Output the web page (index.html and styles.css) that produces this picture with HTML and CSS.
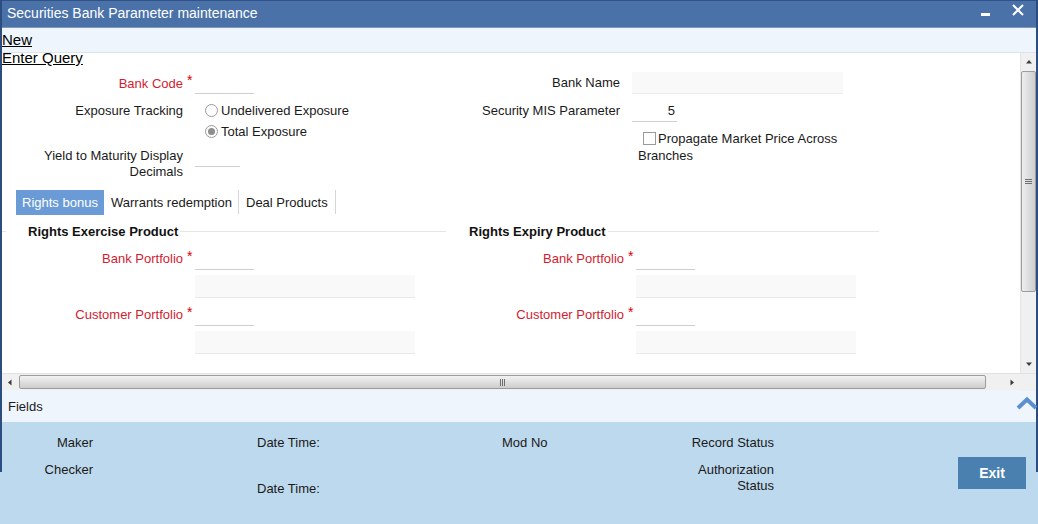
FILE: index.html
```html
<!DOCTYPE html>
<html>
<head>
<meta charset="utf-8">
<link rel="stylesheet" href="styles.css">
</head>
<body>
<div class="window">
  <div class="titlebar">
    <span class="title">Securities Bank Parameter maintenance</span>
    <span class="tb-icons">
      <svg class="ico-min" width="10" height="4" viewBox="0 0 10 4"><rect x="0" y="0" width="9" height="3" fill="#fff"/></svg>
      <svg class="ico-close" width="12" height="12" viewBox="0 0 12 12"><path d="M1 1 L11 11 M11 1 L1 11" stroke="#fff" stroke-width="2"/></svg>
    </span>
  </div>
  <div class="toolbar">
    <a class="tlink">New</a>
    <a class="tlink">Enter Query</a>
  </div>
  <div class="body-area">
    <div class="main">
      <div class="top-grid">
        <div class="col col-l">
          <div class="row r1">
            <span class="lbl req">Bank Code</span><span class="star">*</span>
            <span class="inp w60 h23"></span>
          </div>
          <div class="row r2">
            <span class="lbl lh21">Exposure Tracking</span><span class="star"></span>
            <div class="radios">
              <div class="radio-line"><span class="radio"></span>Undelivered Exposure</div>
              <div class="radio-line"><span class="radio on"></span>Total Exposure</div>
            </div>
          </div>
          <div class="row r3">
            <span class="lbl lh16">Yield to Maturity Display<br>Decimals</span><span class="star"></span>
            <span class="inp w45 yield-inp"></span>
          </div>
        </div>
        <div class="col col-r">
          <div class="row rr1">
            <span class="lbl lbl-r lh22">Bank Name</span>
            <span class="box w211"></span>
          </div>
          <div class="row rr2">
            <span class="lbl lbl-r lh22">Security MIS Parameter</span>
            <span class="inp w45 h22 num">5</span>
          </div>
          <div class="chk-block"><span class="chk"></span>Propagate Market Price Across Branches</div>
        </div>
      </div>
      <div class="tabs">
        <span class="tab active">Rights bonus</span>
        <span class="tab sep t2">Warrants redemption</span>
        <span class="tab sep t3">Deal Products</span>
      </div>
      <div class="fsets">
        <div class="fs fs-l">
          <div class="fs-head"><span class="fs-legend">Rights Exercise Product</span></div>
          <div class="row fr">
            <span class="lbl req lh22">Bank Portfolio</span><span class="star">*</span>
            <span class="inp w60 h22"></span>
          </div>
          <div class="gbox"></div>
          <div class="row fr">
            <span class="lbl req lh22">Customer Portfolio</span><span class="star">*</span>
            <span class="inp w60 h22"></span>
          </div>
          <div class="gbox"></div>
        </div>
        <div class="fs fs-r">
          <div class="fs-head"><span class="fs-legend">Rights Expiry Product</span></div>
          <div class="row fr">
            <span class="lbl req lh22">Bank Portfolio</span><span class="star">*</span>
            <span class="inp w60 h22"></span>
          </div>
          <div class="gbox"></div>
          <div class="row fr">
            <span class="lbl req lh22">Customer Portfolio</span><span class="star">*</span>
            <span class="inp w60 h22"></span>
          </div>
          <div class="gbox"></div>
        </div>
      </div>
    </div>
    <div class="vscroll">
      <svg class="arr" width="16" height="16" viewBox="0 0 16 16"><path d="M5 10 L8 6.5 L11 10 Z" fill="#3c3c3c"/></svg>
      <div class="vthumb"><span class="grip-h"></span><span class="grip-h"></span><span class="grip-h"></span></div>
      <div class="vtrack"></div>
      <svg class="arr" width="16" height="16" viewBox="0 0 16 16"><path d="M5 6 L8 9.5 L11 6 Z" fill="#3c3c3c"/></svg>
    </div>
  </div>
  <div class="hscroll">
    <svg class="arr" width="17" height="17" viewBox="0 0 17 17"><path d="M9.5 5.5 L6 8.5 L9.5 11.5 Z" fill="#3c3c3c"/></svg>
    <div class="hthumb"><span class="grip-v"></span><span class="grip-v"></span><span class="grip-v"></span></div>
    <div class="htrack"></div>
    <svg class="arr" width="17" height="17" viewBox="0 0 17 17"><path d="M7.5 5.5 L11 8.5 L7.5 11.5 Z" fill="#3c3c3c"/></svg>
    <div class="corner"></div>
  </div>
  <div class="fieldsbar">
    <span>Fields</span>
    <svg class="chev" width="22" height="14" viewBox="0 0 22 14"><path d="M2 12 L11 3.5 L20 12" fill="none" stroke="#5b8fd1" stroke-width="4" stroke-linejoin="miter"/></svg>
  </div>
</div>
<div class="footer">
  <div class="fcol c1">
    <div class="fl">Maker</div>
    <div class="fl mt9">Checker</div>
  </div>
  <div class="fcol c2">
    <div class="fl">Date Time:</div>
    <div class="fl mt28">Date Time:</div>
  </div>
  <div class="fcol c3">
    <div class="fl">Mod No</div>
  </div>
  <div class="fcol c4">
    <div class="fl">Record Status</div>
    <div class="fl2 mt10">Authorization<br>Status</div>
  </div>
  <button class="exit">Exit</button>
</div>
</body>
</html>
```

FILE: styles.css
```css
* { box-sizing: border-box; }
html, body { margin: 0; padding: 0; }
body {
  width: 1038px;
  height: 524px;
  overflow: hidden;
  font-family: "Liberation Sans", Arial, sans-serif;
  font-size: 13px;
  color: #1a1a1a;
  background: #bdd9ed;
}
.window {
  border-left: 2px solid #2b4d7f;
  border-right: 2px solid #2b4d7f;
  background: #fff;
}
.titlebar {
  height: 28px;
  background: #4a72a9;
  border-top: 1px solid #2f5186;
  border-bottom: 1px solid #7f97b8;
  display: flex;
  align-items: center;
  justify-content: space-between;
  color: #fff;
  padding-left: 5px;
}
.title { font-size: 14px; position: relative; top: -1px; }
.tb-icons { display: flex; align-items: center; height: 100%; }
.ico-min { margin-right: 21px; margin-top: 2px; }
.ico-close { margin-right: 12px; margin-top: -9px; }
.toolbar {
  height: 25px;
  background: #eef5fd;
  border-bottom: 1px solid #dde3ea;
  padding-top: 3px;
}
.tlink {
  display: block;
  font-size: 15px;
  line-height: 18px;
  color: #000;
  text-decoration: underline;
  width: max-content;
}
.body-area {
  display: flex;
  height: 320px;
}
.main {
  flex: 1;
  padding-top: 19px;
}
.top-grid { display: flex; align-items: flex-start; }
.col-l { width: 440px; }
.col-r { width: 420px; }
.row { display: flex; align-items: flex-start; }
.lbl { display: block; width: 181px; text-align: right; color: #1a1a1a; }
.lbl.req { color: #cf1d30; }
.lbl-r { width: 178px; margin-right: 12px; }
.lh21 { line-height: 21px; }
.lh22 { line-height: 22px; }
.lh16 { line-height: 16px; }
.r1 .lbl { line-height: 23px; }
.star {
  display: block;
  width: 12px;
  padding-left: 4px;
  color: #d00;
  font-size: 14px;
  line-height: 16px;
}
.inp {
  display: block;
  border-bottom: 1px solid #cfcfcf;
  background: #fff;
}
.w60 { width: 59px; }
.w45 { width: 45px; }
.h23 { height: 22px; }
.h22 { height: 22px; }
.num { text-align: right; padding-right: 2px; line-height: 22px; }
.r1 { margin-bottom: 5px; }
.r2 { margin-bottom: 6px; }
.radios { margin-left: 10px; }
.radio-line { display: flex; align-items: center; height: 21px; }
.radio {
  width: 13px; height: 13px;
  border: 1px solid #9a9a9a;
  border-radius: 50%;
  margin-right: 3px;
  background: #fdfdfd;
  display: flex; align-items: center; justify-content: center;
}
.radio.on::after {
  content: "";
  width: 7px; height: 7px;
  border-radius: 50%;
  background: #8d8d8d;
}
.yield-inp { height: 20px; margin-top: -1px; }
.box {
  display: block;
  height: 22px;
  background: #f9f9f9;
  border-bottom: 1px solid #ececec;
}
.w211 { width: 211px; }
.rr1 { margin-bottom: 6px; }
.rr2 { margin-bottom: 8px; }
.chk-block {
  margin-left: 196px;
  width: 210px;
  line-height: 17px;
}
.chk {
  display: inline-block;
  width: 13px; height: 13px;
  border: 1px solid #9a9a9a;
  background: #fdfdfd;
  margin-left: 5px;
  margin-right: 2px;
  vertical-align: -2px;
}
.tabs {
  display: flex;
  margin-top: 10px;
  margin-left: 14px;
  height: 25px;
}
.tab {
  display: flex;
  align-items: center;
  padding: 0 6px;
  height: 25px;
  color: #1a1a1a;
  white-space: nowrap;
}
.tab.active { background: #6a9bd6; color: #fff; width: 88px; }
.tab.sep { position: relative; padding: 0 0 0 7px; }
.tab.t2 { width: 135px; }
.tab.t3 { width: 97px; }
.tab.sep::after {
  content: "";
  position: absolute;
  right: 0; top: 0; bottom: 1px;
  width: 1px;
  background: #d6d6d6;
}
.fsets { display: flex; margin-top: 8px; }
.fs-l { width: 440px; }
.fs-r { width: 437px; }
.fs-head {
  display: flex;
  align-items: center;
  height: 16px;
  margin-bottom: 9px;
}
.fs-head::before {
  content: "";
  width: 4px;
  border-top: 1px solid #e6e6e6;
}
.fs-head::after {
  content: "";
  flex: 1;
  border-top: 1px solid #e6e6e6;
}
.fs-legend {
  font-weight: bold;
  padding-left: 22px;
  padding-right: 2px;
  color: #111;
}
.fs-r .fs-legend { padding-left: 23px; }
.fr { margin-bottom: 5px; }
.fr .star { line-height: 16px; }
.gbox {
  margin-left: 193px;
  width: 220px;
  height: 23px;
  background: #f9f9f9;
  border-bottom: 1px solid #e9e9e9;
  margin-bottom: 6px;
}
.fs-r .row .lbl { width: 182px; }
.fs-r .gbox { margin-left: 194px; }
.vscroll {
  width: 16px;
  background: #f0f0f0;
  display: flex;
  flex-direction: column;
  border-left: 1px solid #e6e6e6;
}
.vscroll .arr { display: block; flex: none; height: 17px; }
.vthumb {
  height: 221px;
  margin: 1px 0 0 0;
  border: 1px solid #9c9c9c;
  border-radius: 2px;
  background: linear-gradient(to right, #eeeeee, #dadada 60%, #cfcfcf);
  display: flex;
  flex-direction: column;
  align-items: center;
  justify-content: center;
  gap: 1px;
}
.grip-h { display: block; width: 7px; height: 1px; background: #6e6e6e; }
.vtrack { flex: 1; }
.hscroll {
  height: 17px;
  background: #f0f0f0;
  border-top: 1px solid #e2e2e2;
  display: flex;
  align-items: center;
}
.hscroll .arr { display: block; flex: none; }
.hthumb {
  width: 967px;
  height: 14px;
  margin-left: 0;
  border: 1px solid #9c9c9c;
  border-radius: 2px;
  background: linear-gradient(to bottom, #f2f2f2, #dcdcdc 60%, #cdcdcd);
  display: flex;
  align-items: center;
  justify-content: center;
  gap: 1px;
}
.grip-v { display: block; width: 1px; height: 7px; background: #6e6e6e; }
.htrack { flex: 1; }
.corner { width: 16px; height: 17px; background: #f0f0f0; }
.fieldsbar {
  height: 32px;
  background: #eef5fd;
  display: flex;
  align-items: center;
  justify-content: space-between;
  padding-left: 6px;
  padding-top: 1px;
}
.chev { margin-right: -2px; margin-top: -7px; }
.footer {
  position: relative;
  height: 102px;
  background: #bdd9ed;
  display: flex;
  align-items: flex-start;
  padding-top: 12px;
}
.footer::before, .footer::after {
  content: "";
  position: absolute;
  top: 0;
  width: 2px;
  height: 50px;
  background: #2b4d7f;
}
.footer::before { left: 0; }
.footer::after { right: 0; }
.fcol { flex: none; }
.fl { line-height: 18px; white-space: nowrap; }
.fl2 { line-height: 16px; }
.c1 { width: 93px; text-align: right; }
.c2 { margin-left: 164px; width: 245px; }
.c3 { width: 120px; }
.c4 { width: 152px; text-align: right; }
.mt9 { margin-top: 9px; }
.mt28 { margin-top: 28px; }
.mt10 { margin-top: 10px; }
.exit {
  margin-left: 184px;
  margin-top: 23px;
  width: 68px;
  height: 32px;
  border: none;
  background: #4a80b0;
  color: #fff;
  font-family: "Liberation Sans", Arial, sans-serif;
  font-size: 14px;
  font-weight: bold;
}
```
